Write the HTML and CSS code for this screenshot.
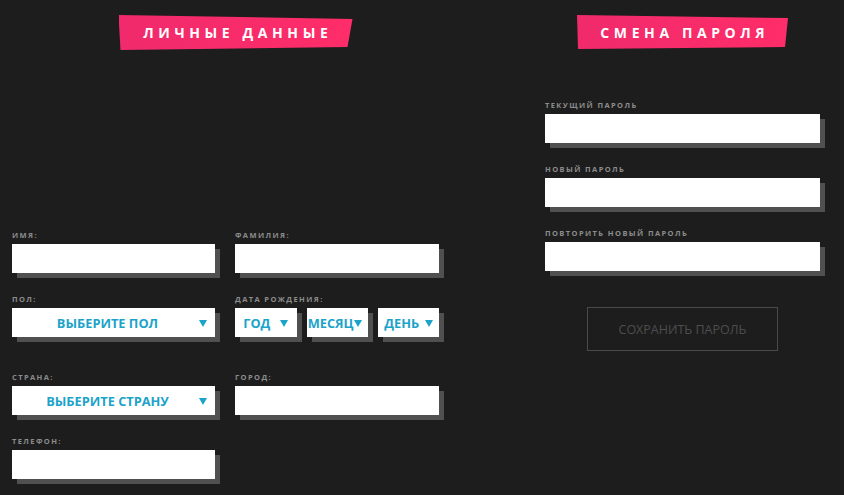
FILE: index.html
```html
<!DOCTYPE html>
<html lang="ru">
<head>
  <meta charset="UTF-8" />
  <meta name="viewport" content="width=device-width, initial-scale=1.0" />
  <title>Профиль</title>
  <link rel="stylesheet" href="styles.css">
</head>
<body>
  <section class="personal">
    <div class="section-head">
      <h2 class="banner banner-left">Личные данные</h2>
    </div>
    <form class="form-grid">
      <div class="field">
        <label>Имя:</label>
        <div class="input"></div>
      </div>
      <div class="field">
        <label>Фамилия:</label>
        <div class="input"></div>
      </div>
      <div class="field">
        <label>Пол:</label>
        <div class="select wide"><span class="select-text">Выберите пол</span><span class="arrow"></span></div>
      </div>
      <div class="field">
        <label>Дата рождения:</label>
        <div class="date-row">
          <div class="select small year"><span class="select-text">Год</span><span class="arrow"></span></div>
          <div class="select small month"><span class="select-text">Месяц</span><span class="arrow"></span></div>
          <div class="select small day"><span class="select-text">День</span><span class="arrow"></span></div>
        </div>
      </div>
      <div class="field extra-top">
        <label>Страна:</label>
        <div class="select wide"><span class="select-text">Выберите страну</span><span class="arrow"></span></div>
      </div>
      <div class="field extra-top">
        <label>Город:</label>
        <div class="input"></div>
      </div>
      <div class="field">
        <label>Телефон:</label>
        <div class="input"></div>
      </div>
    </form>
  </section>

  <section class="password">
    <div class="section-head">
      <h2 class="banner banner-right">Смена пароля</h2>
    </div>
    <div class="password-fields">
      <div class="field">
        <label>Текущий пароль</label>
        <div class="input"></div>
      </div>
      <div class="field">
        <label>Новый пароль</label>
        <div class="input"></div>
      </div>
      <div class="field">
        <label>Повторить новый пароль</label>
        <div class="input"></div>
      </div>
    </div>
    <div class="button-row">
      <button class="save-btn" type="button">Сохранить пароль</button>
    </div>
  </section>
</body>
</html>
```

FILE: styles.css
```css
body {
    margin: 0;
    background-color: #1d1d1d;
    font-family: "Open Sans", "Liberation Sans", sans-serif;
    display: flex;
    height: 495px;
    overflow: hidden;
}

.personal {
    width: 446px;
    padding-left: 12px;
}

.password {
    width: 275px;
    margin-left: 87px;
}

.section-head {
    display: flex;
    justify-content: center;
    padding-top: 15px;
}

.banner {
    margin: 0;
    color: #ffffff;
    font-size: 14px;
    font-weight: 700;
    letter-spacing: 4.6px;
    text-indent: 4.6px;
    text-transform: uppercase;
    display: flex;
    align-items: center;
    justify-content: center;
    background: linear-gradient(to right, #f02a6c, #ff2d69);
}

.banner-left {
    width: 234px;
    height: 35px;
    margin-left: 1px;
    clip-path: polygon(0 0, 234px 4px, 229px 32px, 2px 35px);
}

.banner-right {
    width: 211px;
    height: 34px;
    clip-path: polygon(0 0, 211px 3px, 208px 32px, 1px 34px);
}

/* form fields */
.form-grid {
    display: grid;
    grid-template-columns: 203px 204px;
    column-gap: 20px;
    row-gap: 21px;
    margin-top: 180px;
}

.field label {
    display: block;
    height: 10px;
    line-height: 10px;
    margin-bottom: 4px;
    color: #8c8c8c;
    font-size: 7.5px;
    font-weight: 700;
    letter-spacing: 1.4px;
    text-transform: uppercase;
}

.extra-top {
    margin-top: 14px;
}

.input,
.select {
    height: 29px;
    background-color: #ffffff;
    box-shadow: 5px 5px 0 #505050;
}

.select {
    display: flex;
    align-items: center;
    color: #1ba3c9;
    font-size: 12.8px;
    font-weight: 700;
    text-transform: uppercase;
}

.select.wide {
    padding: 0 8px 0 4px;
}

.select.wide .select-text {
    flex: 1;
    text-align: center;
}

.arrow {
    width: 0;
    height: 0;
    border-left: 4px solid transparent;
    border-right: 4px solid transparent;
    border-top: 7px solid #1ba3c9;
    margin-top: 2px;
}

.date-row {
    display: flex;
    gap: 10px;
}

.select.small {
    justify-content: center;
    gap: 10px;
}

.year {
    width: 62px;
}

.month {
    width: 61px;
    gap: 0 !important;
    justify-content: flex-start !important;
    padding-left: 1px;
}

.day {
    width: 61px;
    gap: 6px !important;
}

/* password */
.password-fields {
    display: flex;
    flex-direction: column;
    gap: 21px;
    margin-top: 51px;
}

.button-row {
    display: flex;
    justify-content: center;
    margin-top: 36px;
}

.save-btn {
    width: 191px;
    height: 44px;
    background: transparent;
    border: 1px solid #4a4a4a;
    color: #4d4d4d;
    font-family: "Open Sans", "Liberation Sans", sans-serif;
    font-size: 12.5px;
    text-transform: uppercase;
    padding: 0;
}
```
